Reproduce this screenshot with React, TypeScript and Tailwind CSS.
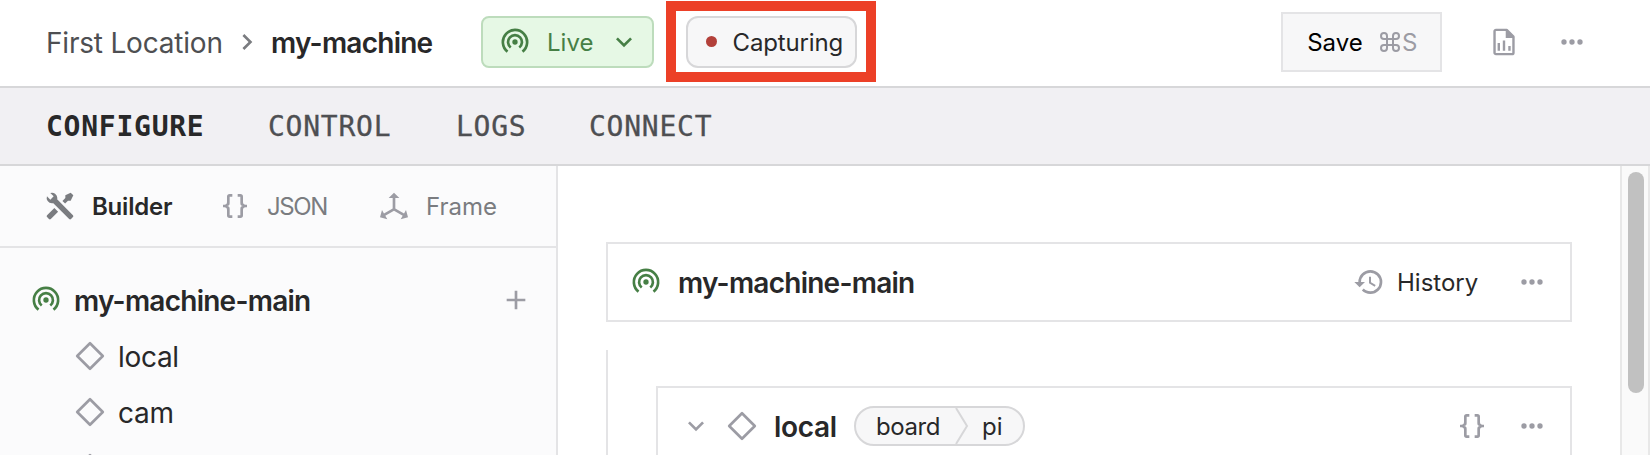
import React from "react";

const P = {
  down: "M7.41,8.58L12,13.17L16.59,8.58L18,10L12,16L6,10L7.41,8.58Z",
  right: "M8.59,16.58L13.17,12L8.59,7.41L10,6L16,12L10,18L8.59,16.58Z",
  dots: "M16,12A2,2 0 0,1 20,12A2,2 0 0,1 16,12M10,12A2,2 0 0,1 14,12A2,2 0 0,1 10,12M4,12A2,2 0 0,1 8,12A2,2 0 0,1 4,12Z",
  plus: "M19,13H13V19H11V13H5V11H11V5H13V11H19V13Z",
  braces:
    "M8,3A2,2 0 0,0 6,5V9A2,2 0 0,1 4,11H3V13H4A2,2 0 0,1 6,15V19A2,2 0 0,0 8,21H10V19H8V14A2,2 0 0,0 6,12A2,2 0 0,0 8,10V5H10V3M16,3A2,2 0 0,1 18,5V9A2,2 0 0,0 20,11H21V13H20A2,2 0 0,0 18,15V19A2,2 0 0,1 16,21H14V19H16V14A2,2 0 0,1 18,12A2,2 0 0,1 16,10V5H14V3H16Z",
  history:
    "M13.5,8H12V13L16.28,15.54L17,14.33L13.5,12.25V8M13,3A9,9 0 0,0 4,12H1L4.96,16.03L9,12H6A7,7 0 0,1 13,5A7,7 0 0,1 20,12A7,7 0 0,1 13,19C11.07,19 9.32,18.21 8.06,16.94L6.64,18.36C8.27,20 10.5,21 13,21A9,9 0 0,0 22,12A9,9 0 0,0 13,3",
  tools:
    "M21.71 20.29L20.29 21.71A1 1 0 0 1 18.88 21.71L7 9.85A3.81 3.81 0 0 1 6 10A4 4 0 0 1 2.22 4.7L4.76 7.24L5.29 6.71L6.71 5.29L7.24 4.76L4.7 2.22A4 4 0 0 1 10 6A3.81 3.81 0 0 1 9.85 7L21.71 18.88A1 1 0 0 1 21.71 20.29M2.29 18.88A1 1 0 0 0 2.29 20.29L3.71 21.71A1 1 0 0 0 5.12 21.71L10.59 16.25L7.76 13.42M20 2L16 4V6L13.83 8.17L15.83 10.17L18 8H20L22 4Z",
  axis: "M12,2L16,6H13V13.85L19.53,17.61L21,15.03L22.5,20.5L17,21.96L18.53,19.35L12,15.58L5.47,19.35L7,21.96L1.5,20.5L3,15.03L4.47,17.61L11,13.85V6H8L12,2Z",
};

function Icon({ d, className = "text-[#9c9ca4]" }: { d: string; className?: string }) {
  return (
    <svg viewBox="0 0 24 24" className={`size-8 shrink-0 ${className}`}>
      <path fill="currentColor" d={d} />
    </svg>
  );
}

function FileChart() {
  return (
    <svg viewBox="0 0 24 24" className="ml-[46px] size-8 shrink-0 text-[#9c9ca4]" fill="none">
      <path
        stroke="currentColor"
        strokeWidth="1.8"
        strokeLinejoin="round"
        d="M6 2.9H14L19.1 8V20A1.1 1.1 0 0 1 18 21.1H6A1.1 1.1 0 0 1 4.9 20V4A1.1 1.1 0 0 1 6 2.9Z"
      />
      <path fill="currentColor" d="M13.3 2.5L19.8 9H13.3ZM7.2 12.8H9V18.6H7.2ZM11.1 10.8H12.9V18.6H11.1ZM15.2 15H17V18.6H15.2Z" />
    </svg>
  );
}

function Broadcast() {
  return (
    <svg viewBox="0 0 24 24" className="size-8 shrink-0 text-[#467f45]" fill="none" stroke="currentColor" strokeWidth="2">
      <circle cx="12" cy="12" r="2" fill="currentColor" stroke="none" />
      <path d="M8.8 16.1A5.2 5.2 0 1 1 15.2 16.1" />
      <path d="M6.4 19.2A9.1 9.1 0 1 1 17.6 19.2" />
    </svg>
  );
}

function Rhombus() {
  return (
    <svg viewBox="0 0 24 24" className="size-8 shrink-0 text-[#9c9ca4]" fill="none" stroke="currentColor" strokeWidth="2">
      <path strokeLinejoin="round" d="M12 2.4L21.6 12L12 21.6L2.4 12Z" />
    </svg>
  );
}

function Command() {
  return (
    <svg viewBox="0 0 24 24" className="size-[24px] shrink-0" fill="none" stroke="currentColor" strokeWidth="2">
      <path d="M15 6v12a3 3 0 1 0 3-3H6a3 3 0 1 0 3 3V6a3 3 0 1 0-3 3h12a3 3 0 1 0-3-3" />
    </svg>
  );
}

const ui = "font-['Inter','Liberation_Sans',sans-serif]";

export default function App() {
  return (
    <div className={`flex h-[455px] w-[1650px] flex-col overflow-hidden whitespace-nowrap bg-white text-[#282829] ${ui}`}>
      <header className="flex h-[88px] shrink-0 items-center border-b-2 border-[#d7d7d9] pb-0.5 pl-[46px] pr-[62px]">
        <span className="w-[177px] pt-0.5 text-[28px] tracking-[-0.2px] text-[#4e4f52]">First Location</span>
        <Icon d={P.right} className="ml-2 text-[#7a7c80]" />
        <span className="ml-2 w-[210px] pt-0.5 text-[28px] font-semibold tracking-[-0.75px]">my-machine</span>
        <button className="flex h-[52px] w-[173px] shrink-0 items-center rounded-lg border-2 border-[#bddcbc] bg-[#e6f8e5] pl-4 text-[#467f45]">
          <Broadcast />
          <span className="ml-4 w-[45px] pt-0.5 text-[24px]">Live</span>
          <Icon d={P.down} className="ml-4 text-[#467f45]" />
        </button>
        <div className="-mt-px ml-3 flex h-[81px] w-[210px] shrink-0 items-center justify-center border-[10px] border-[#ec4027]">
          <div className="flex h-[52px] w-[171px] items-center rounded-xl border-2 border-[#d7d7d9] bg-[#f7f7f8] pl-[18px]">
            <span className="size-[11px] rounded-full bg-[#b3403a]" />
            <span className="ml-4 pt-0.5 text-[24px] tracking-[-0.15px]">Capturing</span>
          </div>
        </div>
        <button className="ml-auto flex h-[60px] w-[161px] shrink-0 items-center border-2 border-[#e4e4e6] bg-[#f7f7f8] pl-6 text-black">
          <span className="w-[56px] pt-0.5 text-[24px]">Save</span>
          <span className="ml-[15px] flex items-center text-[24px] text-[#9c9ca4]">
            <Command />
            <span className="pt-0.5">S</span>
          </span>
        </button>
        <FileChart />
        <Icon d={P.dots} className="ml-9 text-[#9c9ca4]" />
      </header>

      <nav className="flex h-[78px] shrink-0 items-center border-b-2 border-[#d7d7d9] bg-[#f1f0f3] pl-[46px] pt-px font-['DejaVu_Sans_Mono',monospace] text-[28px] tracking-[0.75px] text-[#4e4f52]">
        <span className="w-[222px] font-bold text-[#282829]">CONFIGURE</span>
        <span className="w-[188px] [-webkit-text-stroke:0.3px_#4e4f52]">CONTROL</span>
        <span className="w-[133px] [-webkit-text-stroke:0.3px_#4e4f52]">LOGS</span>
        <span className="[-webkit-text-stroke:0.3px_#4e4f52]">CONNECT</span>
      </nav>

      <div className="flex min-h-0 flex-1">
        <aside className="flex w-[558px] shrink-0 flex-col border-r-2 border-[#e4e4e6] bg-[#fbfbfc]">
          <div className="flex h-[82px] shrink-0 items-center border-b-2 border-[#e4e4e6] pl-11 text-[24px]">
            <Icon d={P.tools} className="text-[#7a7c80]" />
            <span className="ml-4 w-[82px] pt-0.5 font-semibold tracking-[-0.2px]">Builder</span>
            <Icon d={P.braces} className="ml-[45px] text-[#9c9ca4]" />
            <span className="ml-4 w-[61px] pt-0.5 tracking-[-1.4px] text-[#7a7c80]">JSON</span>
            <Icon d={P.axis} className="ml-[50px] text-[#9c9ca4]" />
            <span className="ml-4 pt-0.5 text-[#7a7c80]">Frame</span>
          </div>
          <div className="flex flex-col pt-6 text-[28px]">
            <div className="flex h-14 shrink-0 items-center pl-[30px] pr-6">
              <Broadcast />
              <span className="ml-3 pt-0.5 font-semibold tracking-[-0.75px]">my-machine-main</span>
              <Icon d={P.plus} className="ml-auto text-[#9c9ca4]" />
            </div>
            {["local", "cam", ""].map((name) => (
              <div key={name} className="flex h-14 shrink-0 items-center pl-[74px]">
                <Rhombus />
                <span className="ml-3 pt-0.5 tracking-[-0.3px]">{name}</span>
              </div>
            ))}
          </div>
        </aside>

        <main className="flex flex-1 flex-col pl-12 pr-12 pt-[76px]">
          <section className="flex h-20 shrink-0 items-center border-2 border-[#e4e4e6] px-[22px]">
            <Broadcast />
            <span className="ml-4 pt-0.5 text-[28px] font-semibold tracking-[-0.75px]">my-machine-main</span>
            <Icon d={P.history} className="ml-auto text-[#9c9ca4]" />
            <span className="ml-3 w-[81px] pt-0.5 text-[24px]">History</span>
            <Icon d={P.dots} className="ml-[38px] text-[#9c9ca4]" />
          </section>
          <div className="mt-7 flex h-[105px] shrink-0 flex-col border-l-2 border-[#e4e4e6] pl-12 pt-9">
            <section className="flex h-20 shrink-0 items-center border-2 border-[#e4e4e6] px-[22px]">
              <Icon d={P.down} />
              <span className="ml-[14px] flex">
                <Rhombus />
              </span>
              <span className="ml-4 w-[63px] pt-0.5 text-[28px] font-semibold tracking-[-0.3px]">local</span>
              <div className="ml-[17px] flex h-10 w-[171px] items-center rounded-full border-2 border-[#d7d7d9] bg-[#f7f7f8] pl-5 text-[24px]">
                <span className="w-[65px] pt-0.5 tracking-[-0.4px]">board</span>
                <svg viewBox="0 0 14 36" className="ml-[14px] h-9 w-[14px] shrink-0" fill="none" stroke="#d7d7d9" strokeWidth="2">
                  <path d="M1 0L12 18L1 36" />
                </svg>
                <span className="ml-[13px] pt-0.5">pi</span>
              </div>
              <Icon d={P.braces} className="ml-auto text-[#9c9ca4]" />
              <Icon d={P.dots} className="ml-7 text-[#9c9ca4]" />
            </section>
          </div>
        </main>

        <div className="flex w-[30px] shrink-0 border-l-2 border-r-2 border-[#e8e8e8] bg-[#fafafa] pl-1.5 pt-1.5">
          <div className="h-[221px] w-4 rounded-full bg-[#c1c1c1]" />
        </div>
      </div>
    </div>
  );
}
